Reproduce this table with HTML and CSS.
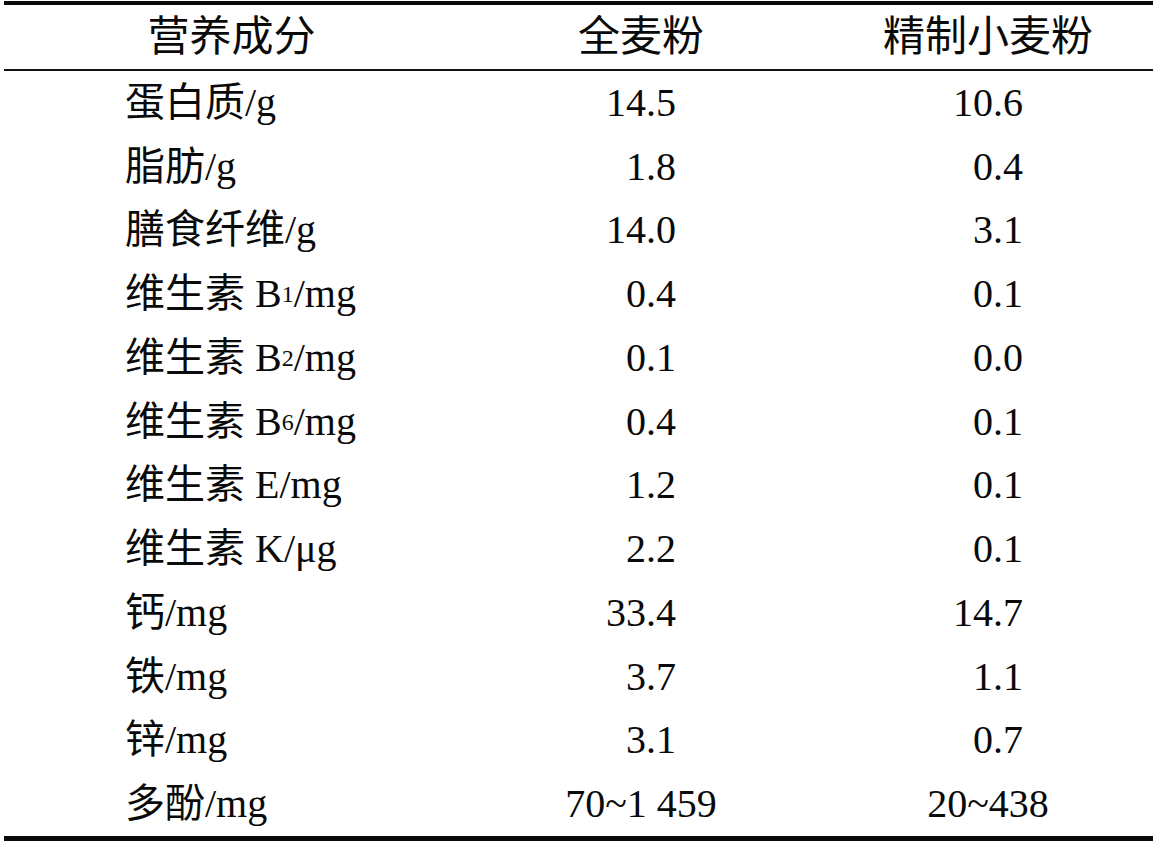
FILE: index.html
```html
<!DOCTYPE html>
<html lang="zh-CN">
<head>
<meta charset="utf-8">
<title>营养成分</title>
<link rel="stylesheet" href="styles.css">
</head>
<body>
<div class="sheet">
  <div class="head">
    <div class="hc c1">营养成分</div>
    <div class="hc">全麦粉</div>
    <div class="hc">精制小麦粉</div>
  </div>
  <div class="body">
    <div class="name">蛋白质/g</div><div class="num"><span>14.5</span></div><div class="num"><span>10.6</span></div>
    <div class="name">脂肪/g</div><div class="num"><span>1.8</span></div><div class="num"><span>0.4</span></div>
    <div class="name">膳食纤维/g</div><div class="num"><span>14.0</span></div><div class="num"><span>3.1</span></div>
    <div class="name">维生素 B<sub>1</sub>/mg</div><div class="num"><span>0.4</span></div><div class="num"><span>0.1</span></div>
    <div class="name">维生素 B<sub>2</sub>/mg</div><div class="num"><span>0.1</span></div><div class="num"><span>0.0</span></div>
    <div class="name">维生素 B<sub>6</sub>/mg</div><div class="num"><span>0.4</span></div><div class="num"><span>0.1</span></div>
    <div class="name">维生素 E/mg</div><div class="num"><span>1.2</span></div><div class="num"><span>0.1</span></div>
    <div class="name">维生素 K/μg</div><div class="num"><span>2.2</span></div><div class="num"><span>0.1</span></div>
    <div class="name">钙/mg</div><div class="num"><span>33.4</span></div><div class="num"><span>14.7</span></div>
    <div class="name">铁/mg</div><div class="num"><span>3.7</span></div><div class="num"><span>1.1</span></div>
    <div class="name">锌/mg</div><div class="num"><span>3.1</span></div><div class="num"><span>0.7</span></div>
    <div class="name">多酚/mg</div><div class="num"><span class="range">70~1 459</span></div><div class="num"><span class="range">20~438</span></div>
  </div>
</div>
</body>
</html>
```

FILE: styles.css
```css
html, body {
  margin: 0;
  padding: 0;
  background: #ffffff;
}

body {
  font-family: "Liberation Serif", "Times New Roman", "Noto Sans CJK SC", serif;
  color: #0a0a0a;
}

.sheet {
  margin: 1px 0 0 4px;
  width: 1149px;
  border-top: 4px solid #0a0a0a;
  border-bottom: 5px solid #0a0a0a;
}

.head,
.body {
  display: grid;
  grid-template-columns: 455px 364px 330px;
}

.head {
  height: 64px;
  border-bottom: 2px solid #111111;
  font-size: 42px;
}

.hc {
  display: flex;
  align-items: center;
  justify-content: center;
  line-height: 1;
}

.body {
  grid-auto-rows: 63.75px;
  font-size: 40px;
}

.name {
  display: flex;
  align-items: center;
  padding-left: 121px;
  line-height: 1;
  white-space: nowrap;
}

.name sub {
  font-size: 0.6em;
  vertical-align: -0.1em;
  line-height: 0;
}

.num {
  display: flex;
  align-items: center;
  justify-content: center;
  line-height: 1;
}

.num span {
  display: inline-block;
  width: 1.75em;
  text-align: right;
}

.num span.range {
  width: auto;
  text-align: center;
}
```
